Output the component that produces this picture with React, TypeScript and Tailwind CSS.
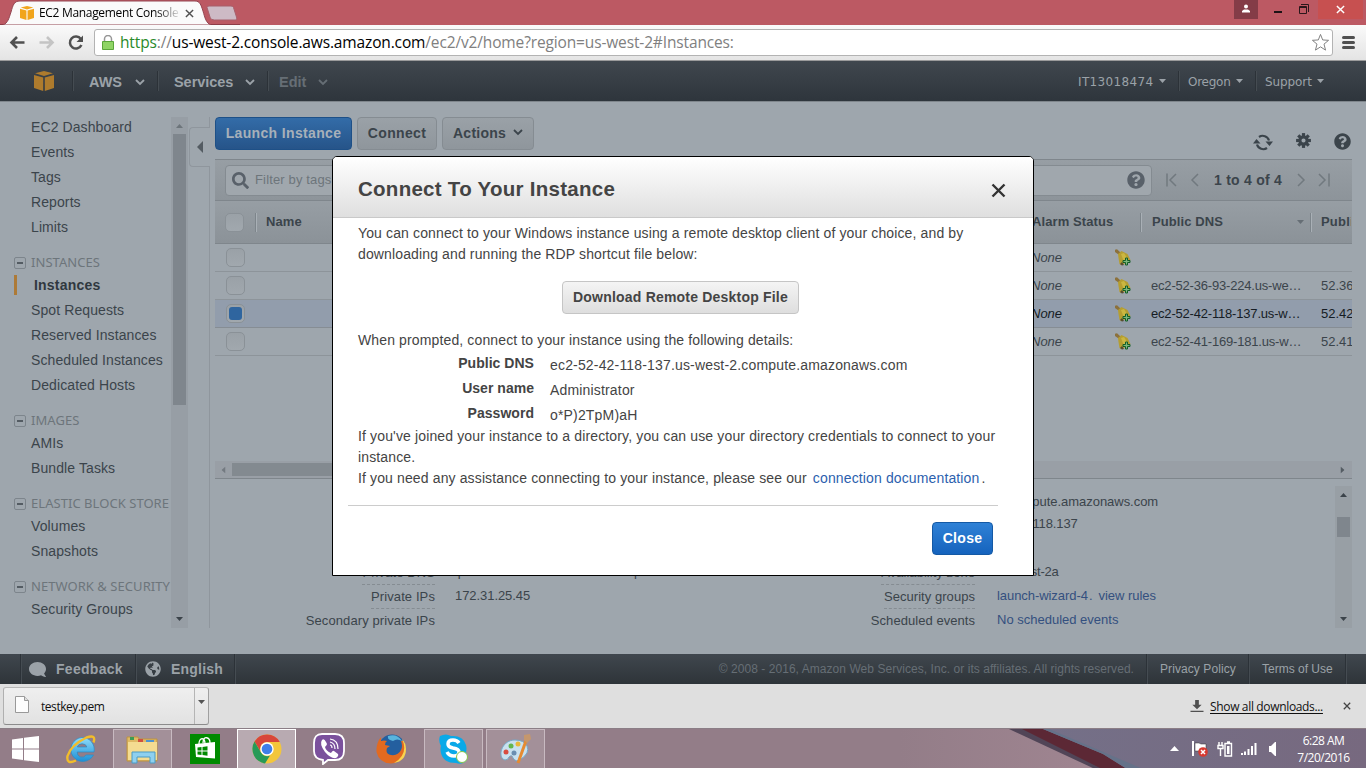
import React from "react";
import { FaComment, FaQuestionCircle, FaSearch, FaGlobeAmericas } from "react-icons/fa";

const Caret = ({ className = "" }: { className?: string }) => (
  <svg viewBox="0 0 7 4" className={"h-[4px] w-[7px] shrink-0 fill-current " + className}><path d="M0 0h7L3.500 4z" /></svg>
);
const Chevron = ({ className = "" }: { className?: string }) => (
  <svg viewBox="0 0 10 7" className={"h-[7px] w-[10px] shrink-0 " + className}><path d="M1 1l4 4 4-4" fill="none" stroke="currentColor" strokeWidth="1.800" /></svg>
);
const Cross = ({ className = "" }: { className?: string }) => (
  <svg viewBox="0 0 10 10" className={"shrink-0 " + className}><path d="M1 1l8 8M9 1L1 9" fill="none" stroke="currentColor" strokeWidth="1.600" /></svg>
);
const Cube = ({ className = "" }: { className?: string }) => (
  <svg viewBox="0 0 20 20" className={"shrink-0 fill-current " + className}>
    <path d="M1 2.300L10 0l9 2.300L10 4.900zM0 4l9.200 2.500V20L0 17zM20 4l-9.200 2.500V20L20 17z" />
  </svg>
);

function Tab() {
  return (
    <div className="relative h-[25px] shrink-0 bg-[#bc5963]">
      <svg viewBox="0 0 240 25" className="absolute left-0 top-0 h-[25px] w-[240px]">
        <path d="M0 24.500H240" stroke="#8d3c47" />
        <path d="M3 25C8 23 9 18 11 12C13 5 14 1 20 1H195C200 1 201 5 203 11C205 18 206 23 211 25z" fill="#fafafa" stroke="#934551" />
        <path d="M207 7.500q0-1.500 2-1.500h22q2 0 2.500 1.500l3.300 10.500q.5 2-1.500 2h-21q-3 0-4-2z" fill="#cdbac5" stroke="#a75f6b" />
      </svg>
      <div className="relative flex h-[25px] items-center pl-[20px]">
        <Cube className="h-[14px] w-[14px] text-[#f1a51c]" />
        <span className="ml-[5px] mt-[1px] w-[140px] overflow-hidden whitespace-nowrap bg-gradient-to-r from-black from-80% to-[#e4e4e4] bg-clip-text font-['Open_Sans',sans-serif] text-[12px] tracking-[-0.32px] text-transparent">EC2 Management Console</span>
        <Cross className="ml-[6px] mt-[1px] h-[9px] w-[9px] text-[#505050]" />
        <div className="ml-auto flex h-[25px] items-start">
          <span className="mr-[16px] flex h-[19px] w-[24px] items-center justify-center bg-[#843c47]">
            <svg viewBox="0 0 8 8" className="mb-[2px] h-[9px] w-[8px] fill-white"><circle cx="4" cy="2" r="2" /><path d="M0 8V6.500L2 5h4l2 1.500V8z" /></svg>
          </span>
          <span className="mt-[11px] h-[2px] w-[8px] bg-[#1c1215]" />
          <svg viewBox="0 0 10 10" className="ml-[17px] mt-[4px] h-[10px] w-[10px] fill-none stroke-[#2a171b]"><path d="M.500 2.500h7v7h-7zM.500 3.500h7M2 .500h7.500V8" /></svg>
          <span className="ml-[9px] flex h-[19px] w-[45px] items-center justify-center bg-[#c75050]"><Cross className="h-[9px] w-[9px] text-white" /></span>
          <span className="w-[3px]" />
        </div>
      </div>
    </div>
  );
}

function AddressBar() {
  return (
    <div className="flex h-[36px] shrink-0 items-center border-b border-[#9b9b9b] bg-gradient-to-b from-[#fafafa] to-[#e4e4e4] pl-[9px] pr-[9px]">
      <svg viewBox="0 0 16 13" className="h-[13px] w-[16px] fill-none stroke-[#505050] stroke-[2.600]"><path d="M15.500 6.500H2.500M8 1L2.500 6.500L8 12" /></svg>
      <svg viewBox="0 0 16 13" className="ml-[14px] h-[13px] w-[16px] fill-none stroke-[#c4c4c4] stroke-[2.600]"><path d="M.500 6.500h13M8 1l5.500 5.500L8 12" /></svg>
      <svg viewBox="0 0 16 16" className="ml-[12px] h-[16px] w-[17px]"><path d="M13.300 4A6 6 0 1 0 13.900 10" fill="none" stroke="#505050" strokeWidth="2.500" /><path d="M15.500.500V7H9z" fill="#505050" /></svg>
      <div className="ml-[10px] flex h-[27px] flex-1 items-center rounded-[3px] border border-[#b3b3b3] bg-white pl-[7px] pr-[2px]">
        <svg viewBox="0 0 12 15" className="h-[15px] w-[12px]"><path d="M2.500 7V4a3.500 3.500 0 0 1 7 0v3" fill="none" stroke="#969696" strokeWidth="1.500" /><path d="M.500 6.500h11v8H.500z" fill="#8fd465" stroke="#5aa63a" /></svg>
        <span className="ml-[6px] mt-[1px] whitespace-nowrap font-['Open_Sans',sans-serif] text-[15.5px] tracking-[-0.14px] text-[#808080]"><span className="text-[#2a8a2a]">https</span>://<span className="text-black">us-west-2.console.aws.amazon.com</span>/ec2/v2/home?region=us-west-2#Instances:</span>
        <svg viewBox="0 0 20 20" className="ml-auto h-[19px] w-[19px] fill-white stroke-[#7b7b7b]"><path strokeLinejoin="round" d="M10 1.500l2.300 5.800 6.200.4-4.800 4 1.600 6.300L10 14.600 4.700 18l1.600-6.300-4.800-4 6.200-.4z" /></svg>
      </div>
      <span className="ml-[9px] mr-[2px] flex w-[13px] flex-col gap-[2px]"><i className="h-[3px] rounded-sm bg-[#505050]" /><i className="h-[3px] rounded-sm bg-[#505050]" /><i className="h-[3px] rounded-sm bg-[#505050]" /></span>
    </div>
  );
}

function AwsNav() {
  const sep = "h-[20px] w-[2px] border-l border-r border-l-[#2c3238] border-r-[#454c52]";
  return (
    <div className="flex h-[40px] shrink-0 items-center bg-gradient-to-b from-[#40474e] to-[#2e353c] pl-[34px] text-[14.500px] font-bold text-[#9ba2a8]">
      <Cube className="h-[20px] w-[20px] text-[#ae7b2d]" />
      <span className={"ml-[18px] " + sep} />
      <span className="ml-[15px] mt-[3px] w-[46px]">AWS</span><Chevron className="mt-[2px] h-[6px] w-[9px]" />
      <span className={"ml-[12px] " + sep} />
      <span className="ml-[15px] mt-[3px] w-[71px] tracking-[-0.05px]">Services</span><Chevron className="mt-[2px] h-[6px] w-[9px]" />
      <span className={"ml-[12px] " + sep} />
      <span className="ml-[10px] mt-[3px] w-[39px] text-[#666e75]">Edit</span><Chevron className="mt-[2px] h-[6px] w-[9px] text-[#666e75]" />
      <div className="ml-auto flex items-center font-['DejaVu_Sans',sans-serif] text-[12px] font-normal">
        <span className="mt-[1px] w-[81px] tracking-[0.35px]">IT13018474</span><Caret />
        <span className={"ml-[12px] mr-[8px] " + sep} />
        <span className="mt-[1px] w-[48px] tracking-[-0.25px]">Oregon</span><Caret />
        <span className={"ml-[12px] mr-[8px] " + sep} />
        <span className="mt-[1px] w-[52px] tracking-[-0.1px]">Support</span><Caret className="mr-[42px]" />
      </div>
    </div>
  );
}

const groups: [string, string[]][] = [
  ["", ["EC2 Dashboard", "Events", "Tags", "Reports", "Limits"]],
  ["INSTANCES", ["Instances", "Spot Requests", "Reserved Instances", "Scheduled Instances", "Dedicated Hosts"]],
  ["IMAGES", ["AMIs", "Bundle Tasks"]],
  ["ELASTIC BLOCK STORE", ["Volumes", "Snapshots"]],
  ["NETWORK & SECURITY", ["Security Groups"]],
];

function Sidebar() {
  return (
    <div className="flex w-[189px] shrink-0 pt-[15px]">
      <div className="-mt-[3px] w-[171px] overflow-hidden pl-[14px] text-[14px] tracking-[0.1px]">
        {groups.map(([name, items]) => (
          <div key={name}>
            {name && (
              <div className="flex h-[33px] items-center whitespace-nowrap pt-[15px]">
                <span className="mr-[5px] flex h-[12px] w-[12px] shrink-0 items-center justify-center rounded-[2px] border border-[#7d858c]"><i className="h-[2px] w-[6px] bg-[#545c63]" /></span>
                <span className="font-['Noto_Sans',sans-serif] text-[13px] tracking-[0.05px] text-[#6d757b]">{name}</span>
              </div>
            )}
            {items.map((t) => (
              <div key={t} className={t === "Instances" ? "flex h-[25px] items-center font-bold tracking-[0.2px] text-[#30383f]" : "flex h-[25px] items-center pl-[17px]"}>
                {t === "Instances" && <i className="mr-[17px] h-[20px] w-[3px] bg-[#ad7a37]" />}
                <span className="mt-[2px]">{t}</span>
              </div>
            ))}
          </div>
        ))}
      </div>
      <div className="flex h-[511px] w-[17px] flex-col items-center bg-[#979ea5]">
        <span className="flex h-[17px] items-center"><Caret className="rotate-180 text-[#6d757b]" /></span>
        <span className="h-[271px] w-[13px] bg-[#7f868d]" />
        <span className="mb-[7px] mt-auto"><Caret className="text-[#3b434a]" /></span>
      </div>
    </div>
  );
}

function Splitter() {
  return (
    <div className="flex h-[526px] w-[26px] shrink-0 flex-col pt-[15px]">
      <span className="h-[10px] w-[21px] border-r border-[#8f969d]" />
      <span className="flex h-[40px] w-[21px] items-center rounded-l-[4px] border-y border-l border-[#8f969d] pl-[7px]">
        <svg viewBox="0 0 6 12" className="h-[12px] w-[6px] fill-[#545c63]"><path d="M6 0v12L0 6z" /></svg>
      </span>
      <span className="w-[21px] flex-1 border-r border-[#8f969d]" />
    </div>
  );
}

const Box = ({ on = false }: { on?: boolean }) => (
  <span className="flex h-[19px] w-[19px] items-center justify-center rounded-[5px] border border-[#8a9197] bg-gradient-to-b from-[#9aa1a7] to-[#a1a8ae]">
    {on && <i className="h-[13px] w-[13px] rounded-[3px] bg-[#2f659f]" />}
  </span>
);

const Bell = () => (
  <svg viewBox="0 0 17 17" className="h-[17px] w-[17px]">
    <path d="M1 .800l2-.600 3.500 3.300-2 2L1 3z" fill="#8c713c" />
    <path d="M4 5l3.500-3 6 3 3 6-4 2.500-5 2.800-2-1.200L4.500 9z" fill="#b59e31" />
    <path d="M7 5l3-1 3 5-3 4z" fill="#cbb741" />
    <path d="M6 15l2-2 2 3-2 .600z" fill="#554b32" />
    <path d="M11.500 9h2v2.500H16v2h-2.500V16h-2v-2.500H9v-2h2.500z" fill="#7cb77e" stroke="#135d26" />
  </svg>
);

const rows = [
  { dns: "", ip: "", on: false },
  { dns: "ec2-52-36-93-224.us-we…", ip: "52.36", on: false },
  { dns: "ec2-52-42-118-137.us-w…", ip: "52.42", on: true },
  { dns: "ec2-52-41-169-181.us-w…", ip: "52.41", on: false },
];

function InstanceTable() {
  const sep = "h-[19px] w-[2px] border-l border-r border-l-[#7d858b] border-r-[#a9b0b6]";
  return (
    <div className="flex h-[320px] flex-col border-b border-t border-[#7f868c]">
      <div className="flex h-[41px] shrink-0 items-center border-b border-[#7f868c] bg-gradient-to-b from-[#979ea4] to-[#8d949a] pl-[10px]">
        <div className="flex h-[31px] w-[927px] items-center rounded-[4px] border border-[#848b91] bg-[#a0a7ad] pl-[6px] pr-[6px] text-[13px] tracking-[0.15px] text-[#6d757b]">
          <FaSearch className="h-[17px] w-[17px] text-[#59616a]" />
          <span className="ml-[6px]">Filter by tags</span>
          <FaQuestionCircle className="ml-auto h-[18px] w-[18px] text-[#59616a]" />
        </div>
        <svg viewBox="0 0 34 14" className="ml-[14px] h-[14px] w-[34px] fill-none stroke-[#71797f] stroke-[1.500]"><path d="M1 .500v13M10 1L4 7l6 6M32 1l-6 6 6 6" /></svg>
        <span className="ml-[14px] text-[14px] font-bold tracking-[0.25px]">1 to 4 of 4</span>
        <svg viewBox="0 0 34 14" className="ml-[15px] h-[14px] w-[34px] fill-none stroke-[#71797f] stroke-[1.500]"><path d="M1 1l6 6-6 6M22 1l6 6-6 6M32 .500v13" /></svg>
      </div>
      <div className="flex h-[43px] shrink-0 items-center overflow-hidden border-b border-[#7f868c] bg-gradient-to-b from-[#979ea4] to-[#8b9298] pl-[10px] text-[13px] font-bold tracking-[0.1px]">
        <Box />
        <span className={"ml-[11px] " + sep} />
        <span className="ml-[9px] w-[766px]">Name</span>
        <span className="w-[108px] whitespace-nowrap">Alarm Status</span>
        <span className={sep} />
        <span className="ml-[10px] w-[145px]">Public DNS</span><Caret className="mr-[6px] text-[#666e75]" />
        <span className={sep} />
        <span className="ml-[9px] w-[30px] shrink-0 overflow-hidden whitespace-nowrap tracking-[0.2px]">Public IP</span>
      </div>
      {rows.map((r, i) => (
        <div key={i} className={r.on ? "flex h-[28px] shrink-0 items-center border-b border-[#868d94] bg-[#929dac] pl-[11px] text-[13px] text-[#151c24]" : "flex h-[28px] shrink-0 items-center border-b border-[#8d949a] pl-[11px] text-[13px]"}>
          <Box on={r.on} />
          <span className="ml-[786px] mt-[1px] w-[83px] italic">None</span>
          <Bell />
          <span className="ml-[20px] mt-[1px] w-[170px] whitespace-nowrap tracking-[-0.19px]">{r.dns}</span>
          <span className="mt-[1px] w-[31px] overflow-hidden whitespace-nowrap">{r.ip}</span>
        </div>
      ))}
      <div className="mt-auto flex h-[17px] items-center bg-[#999fa6] pl-[6px] pr-[6px]">
        <Caret className="-ml-[1px] rotate-90 text-[#737a81]" />
        <span className="ml-[5px] h-[13px] w-[560px] bg-[#838a90]" />
        <Caret className="ml-auto -rotate-90 text-[#545c63]" />
      </div>
    </div>
  );
}

const details: [string, string, string, string][] = [
  ["Private DNS", "ip-172-31-25-45.us-west-2.compute.internal", "Availability zone", "us-west-2a"],
  ["Private IPs", "172.31.25.45", "Security groups", ""],
  ["Secondary private IPs", "", "Scheduled events", ""],
];

function Details() {
  return (
    <div className="flex h-[149px] pt-[7px] text-[13px]">
      <div className="h-[142px] flex-1 overflow-hidden pt-[5px]">
        <div className="h-[22px] whitespace-nowrap pl-[782px] leading-[22px] tracking-[-0.03px]">2.compute.amazonaws.com</div>
        <div className="h-[22px] pl-[782px] leading-[22px] tracking-[-0.12px]">52.42.118.137</div>
        <div className="h-[26px]" />
        {details.map(([a, b, c, d], i) => (
          <div key={a} className="flex h-[24px] whitespace-nowrap leading-[22px]">
            <span className="flex w-[220px] justify-end pt-[1px] tracking-[0.1px]"><span className={i < 2 ? "h-[23px] border-b border-dashed border-[#858c92]" : "h-[23px]"}>{a}</span></span>
            <span className="w-[300px] pl-[20px] tracking-[-0.06px]">{b}</span>
            <span className="flex w-[240px] justify-end pt-[1px] tracking-[0.05px]"><span className={i < 2 ? "h-[23px] border-b border-dashed border-[#858c92]" : "h-[23px]"}>{c}</span></span>
            <span className="pl-[22px] text-[#34507f]">
              {i === 0 && <span className="tracking-[-0.2px] text-[#3b444b]">{d}</span>}
              {i === 1 && <><span className="tracking-[-0.06px]">launch-wizard-4</span><span className="ml-[1px]">.</span><span className="ml-[6px] tracking-[-0.03px]">view rules</span></>}
              {i === 2 && "No scheduled events"}
            </span>
          </div>
        ))}
      </div>
      <div className="flex h-[142px] w-[17px] flex-col items-center bg-[#989fa5]">
        <Caret className="mt-[7px] rotate-180 text-[#3b434a]" />
        <span className="mt-[20px] h-[20px] w-[13px] bg-[#7f868d]" />
        <Caret className="mb-[7px] mt-auto text-[#3b434a]" />
      </div>
    </div>
  );
}

function Workspace() {
  return (
    <div className="flex h-[553px] shrink-0 border-t border-[#7f868c] bg-[#9ea6ad] text-[#3b444b]">
      <Sidebar />
      <Splitter />
      <div className="w-[1137px] pt-[15px]">
        <div className="flex h-[42px] items-start gap-[5px] pr-[1px] text-[14px] font-bold tracking-[0.35px]">
          <span className="flex h-[33px] w-[137px] items-center justify-center rounded-[4px] border border-[#1e5087] bg-gradient-to-b from-[#336ca8] to-[#265489] text-[#a7b0b9]">Launch Instance</span>
          <span className="flex h-[33px] w-[80px] items-center justify-center rounded-[4px] border border-[#858c92] bg-gradient-to-b from-[#9aa1a7] to-[#8f969c]">Connect</span>
          <span className="flex h-[33px] w-[92px] items-center rounded-[4px] border border-[#858c92] bg-gradient-to-b from-[#9aa1a7] to-[#8f969c] pl-[10px]"><span className="w-[60px] tracking-[0.25px]">Actions</span><Chevron className="-mt-[2px]" /></span>
          <svg viewBox="0 0 20 17" className="ml-auto mt-[17px] h-[17px] w-[20px]"><path d="M4 10.500A6.500 6.500 0 0 0 14 14M16 6.500A6.500 6.500 0 0 0 6 3" fill="none" stroke="#3b444b" strokeWidth="2.200" /><path d="M0 9.500L3.500 5l4 4.500zM12.500 7.500H20L16.500 12z" fill="#3b444b" /></svg>
          <svg viewBox="-8 -8 16 16" className="ml-[18px] mt-[16px] h-[15px] w-[15px] fill-[#3b444b]">
            <path fillRule="evenodd" d="M-5.500 0a5.500 5.500 0 1 0 11 0a5.500 5.500 0 1 0-11 0M-2.200 0a2.200 2.200 0 1 0 4.400 0a2.200 2.200 0 1 0-4.400 0" />
            {[0, 45, 90, 135, 180, 225, 270, 315].map((a) => <rect key={a} x="-1.700" y="-7.900" width="3.400" height="4" transform={`rotate(${a})`} />)}
          </svg>
          <FaQuestionCircle className="ml-[18px] mt-[16px] h-[17px] w-[17px]" />
        </div>
        <InstanceTable />
        <Details />
      </div>
    </div>
  );
}

function Footer() {
  const sep = "h-[30px] w-[2px] border-l border-r border-l-[#2c3238] border-r-[#454c52]";
  return (
    <div className="flex h-[30px] shrink-0 items-center bg-gradient-to-b from-[#40474e] to-[#2e3439] pl-[20px] text-[#9ba2a8]">
      <span className={sep} />
      <FaComment className="ml-[7px] h-[17px] w-[17px] -scale-x-100" />
      <span className="ml-[10px] w-[79px] text-[14px] font-bold tracking-[0.28px]">Feedback</span>
      <span className={sep} />
      <FaGlobeAmericas className="ml-[8px] h-[16px] w-[16px]" />
      <span className="ml-[10px] w-[63px] text-[14px] font-bold tracking-[0.2px]">English</span>
      <span className={sep} />
      <span className="ml-auto text-[12px] tracking-[0.05px] text-[#666e75]">© 2008 - 2016, Amazon Web Services, Inc. or its affiliates. All rights reserved.</span>
      <span className={"ml-[12px] " + sep} />
      <span className="ml-[12px] w-[88px] text-[12px] tracking-[0.08px]">Privacy Policy</span>
      <span className={sep} />
      <span className="ml-[12px] w-[83px] text-[12px]">Terms of Use</span>
      <span className={"mr-[19px] " + sep} />
    </div>
  );
}

function DownloadShelf() {
  return (
    <div className="flex h-[44px] shrink-0 items-center bg-[#dfdfdf] pl-[3px] pr-[15px] font-['Open_Sans',sans-serif] text-[12px] text-[#111]">
      <div className="flex h-[38px] w-[206px] items-center rounded-[3px] border border-b-[#8c8c8c] border-l-[#b0b0b0] border-r-[#a0a0a0] border-t-[#b8b8b8] bg-gradient-to-b from-[#efefef] to-[#e2e2e2]">
        <svg viewBox="0 0 14 17" className="mb-[3px] ml-[11px] h-[17px] w-[14px]"><path d="M.500.500h9l4 4v12H.500z" fill="#fdfdfd" stroke="#999" /><path d="M9.500.500v4h4" fill="#ddd" stroke="#999" /></svg>
        <span className="ml-[12px] mt-[2px] w-[153px] tracking-[-0.45px]">testkey.pem</span>
        <span className="flex h-full w-[13px] justify-center border-l border-[#b5b5b5]"><Caret className="ml-[1px] mt-[12px] h-[3px] w-[5px] text-[#555]" /></span>
      </div>
      <svg viewBox="0 0 14 14" className="ml-auto h-[13px] w-[14px] fill-[#505050]"><path d="M5 0h4v5h3L7 10 2 5h3zM0 11.500h14V13H0z" /></svg>
      <span className="ml-[6px] mt-[2px] w-[113px] whitespace-nowrap tracking-[-0.34px] underline underline-offset-2">Show all downloads...</span>
      <Cross className="ml-[20px] h-[8px] w-[8px] text-[#444]" />
    </div>
  );
}

function Taskbar() {
  const active = "flex h-[40px] items-center justify-center border border-[#c8bac1] bg-white/15";
  return (
    <div className="relative h-[40px] shrink-0 overflow-hidden border-t border-[#8b7e86] bg-[#937d88]">
      <svg viewBox="0 0 466 40" preserveAspectRatio="none" className="absolute right-0 top-0 h-[40px] w-[466px]">
        <defs>
          <linearGradient id="sky"><stop offset="0" stopColor="#747088" /><stop offset="1" stopColor="#77697f" /></linearGradient>
          <linearGradient id="pink"><stop offset="0" stopColor="#937d88" /><stop offset="1" stopColor="#a08591" /></linearGradient>
        </defs>
        <path d="M0 0h115l85 40H0z" fill="url(#pink)" />
        <path d="M140 0h326v40H220z" fill="url(#sky)" />
        <path d="M109 0h20l77 40h-11z" fill="#514557" />
        <path d="M122 0h21l60 25 24 15h-25z" fill="#5c2835" />
        <path d="M143 0h6l52 22 42 18h-16l-24-15z" fill="#657289" />
      </svg>
      <div className="relative flex h-[39px] items-center">
        <svg viewBox="0 0 27 26" className="ml-[12px] h-[26px] w-[27px] fill-white"><path d="M0 3.500l11-1.500v10.500H0zM12 1.800L27 0v12.500H12zM0 13.500h11V24L0 22.500zM12 13.500h15V26l-15-1.800z" /></svg>
        <svg viewBox="0 0 32 32" className="ml-[26px] h-[32px] w-[32px]">
          <defs><linearGradient id="ie" x2="0" y2="1"><stop offset="0" stopColor="#8fdcfa" /><stop offset="1" stopColor="#1c8fd6" /></linearGradient></defs>
          <path d="M17 4.500a12 12 0 1 0 11.500 17.500h-7.500a4.800 4.800 0 0 1-8.800-3h16.800A12 12 0 0 0 17 4.500M12.300 14a5 4.500 0 0 1 9.600 0z" fill="url(#ie)" stroke="#2a8cc6" strokeWidth=".700" />
          <path d="M28.500 9.500q3-8.500-7-5Q6 12 2.500 23q-1.500 9 8.500 4.500" fill="none" stroke="#f2bd2a" strokeWidth="2.400" />
        </svg>
        <span className={"ml-[16px] w-[59px] " + active}>
          <svg viewBox="0 0 34 30" className="h-[30px] w-[34px]"><path d="M1 3h11l1 2h18v22H1z" fill="#dfba64" stroke="#bd9341" /><path d="M4 3h4v3H4z" fill="#3b9c54" /><path d="M12 5h5v3h-5z" fill="#d2503e" /><path d="M20 6h8v2h-8z" fill="#4e94cf" /><path d="M2 8h29v18H2z" fill="#f4dc91" /><path d="M6 29V18h23v11h-5v-6H11v6z" fill="#8ed0ef" stroke="#4b9bc5" /></svg>
        </span>
        <svg viewBox="0 0 30 30" className="ml-[18px] h-[30px] w-[30px]"><path d="M0 0h30v30H0z" fill="#008a00" /><path d="M5 10l20-2v16.500L6 23z" fill="#fff" /><path d="M9 10c0-7 6-7 6 0M13 9c0-8 7-6 7 0" fill="none" stroke="#fff" strokeWidth="1.300" /><path d="M7.500 13.500l4-.500v3.500h-4zM12.500 12.900l5-.600v4.200h-5zM7.500 17.500h4V21l-4-.500zM12.500 17.500h5v4.200l-5-.600z" fill="#008a00" /></svg>
        <span className="ml-[17px] flex h-[40px] w-[59px] items-center justify-center border border-white bg-white/35">
          <svg viewBox="-15 -15 30 30" className="h-[30px] w-[30px]"><circle r="14.500" fill="#f3c63c" /><path d="M0-14.500A14.500 14.500 0 0 1 12.800-7H0A7 7 0 0 0-6.500 2.500L-12.500-7.500A14.500 14.500 0 0 1 0-14.500" fill="#d8463a" /><path d="M-12.500-7.500L-6 3.500A7 7 0 0 0 3 6.500L-2 14.400A14.500 14.500 0 0 1-12.500-7.500" fill="#279a57" /><circle r="6.700" fill="#fff" /><circle r="5.300" fill="#3f7fe8" /></svg>
        </span>
        <svg viewBox="0 0 32 32" className="ml-[17px] h-[32px] w-[32px]"><path d="M9 1h13q9 0 9 9v8q0 9-9 9h-7l-5 4v-4q-9-1-9-9v-8q0-9 8-9z" fill="#7b519d" stroke="#fff" strokeWidth="1.800" /><path d="M9 7q2-2 4 2l1 2q0 1-2 3 1 4 6 6 2-3 3-2l4 3q1 2-2 4-5 1-11-6Q6 11 9 7" fill="#fff" /><path d="M17 6q8 1 8 10M17 9q5 1 5 7M17 12q2 0 2 3" fill="none" stroke="#fff" strokeWidth="1.200" /></svg>
        <svg viewBox="0 0 30 30" className="ml-[31px] h-[30px] w-[30px]"><circle cx="16" cy="14" r="13.500" fill="#245f9f" /><path d="M12 2q9-3 14 5-5-3-9 0-6-1-5-5z" fill="#59b4dd" /><path d="M27 7q4 7 1 14-4 8-13 8.500Q3 29 .500 18 0 9 5 3v4q3-1 6 0-2 1-2 4l5 1-3 2q-2 6 4 7 7 1 10-5 2-4 0-9z" fill="#e26a20" /><path d="M26 5q7 15-8 24 12-2 12-14 0-6-4-10z" fill="#f9d44e" /></svg>
        <span className={"ml-[18px] w-[59px] " + active}>
          <svg viewBox="0 0 30 30" className="h-[30px] w-[30px]"><path d="M1 2q6-3 11 0 12-1 15 9 1 4 0 7 3 6-1 10-4 3-9 1Q4 29 2 19 1 15 2 12-1 7 1 2" fill="#0aa9e8" /><path d="M20 9q-2-3-6-3-5 0-5 4 0 3 5 4 6 1 6 4 0 4-5 4t-7-4" fill="none" stroke="#fff" strokeWidth="3.500" /><circle cx="23" cy="23" r="5.500" fill="#fff" stroke="#89c646" /></svg>
        </span>
        <span className={"ml-[3px] w-[59px] " + active}>
          <svg viewBox="0 0 32 32" className="h-[32px] w-[32px]"><path d="M15 7C1 7-3 25 5 27q3 0 4-3 3-3 4 1 3 5 8 1 9-6 6-13-3-6-12-6" fill="#c9e1ef" stroke="#75a9c9" /><circle cx="6" cy="19" r="2.500" fill="#d84c40" /><circle cx="11" cy="13" r="2.500" fill="#63b64e" /><circle cx="18" cy="11" r="2.500" fill="#e8b83b" /><circle cx="14" cy="20" r="2.500" fill="#6a8eb1" /><path d="M27 5l-9 25" stroke="#e58b32" strokeWidth="3" /><path d="M24 2l6-1 1 5-4 4-3-3z" fill="#c5976d" /></svg>
        </span>
        <div className="ml-auto flex items-center font-['Open_Sans',sans-serif] text-white">
          <svg viewBox="0 0 9 5" className="h-[5px] w-[9px] fill-white"><path d="M0 5l4.500-5L9 5z" /></svg>
          <svg viewBox="0 0 16 16" className="ml-[13px] h-[16px] w-[16px]"><path d="M1 0v15" stroke="#fff" strokeWidth="2" /><path d="M3 2h4l2 1h5v7H3z" fill="#fff" stroke="#333" strokeWidth=".500" /><circle cx="11" cy="11" r="4.800" fill="#d73a31" /><path d="M9 9l4 4m0-4l-4 4" stroke="#fff" strokeWidth="1.500" /></svg>
          <svg viewBox="0 0 16 16" className="ml-[9px] h-[16px] w-[16px] fill-none stroke-white stroke-[1.400]"><path d="M2 1v3M5 1v3M1 4.500h5v3H1zM3.500 8v7" /><path d="M8 2.500h6.500V15H8zM10 1h3" /><path d="M10 5h2.500v8H10z" fill="white" stroke="none" /></svg>
          <svg viewBox="0 0 16 12" className="ml-[8px] h-[12px] w-[16px] fill-white"><path d="M0 10h2v2H0zM3 8.500h2V12H3zM6.500 6h2v6h-2zM10 3h2v9h-2zM13.500 0h2v12h-2z" /></svg>
          <svg viewBox="0 0 8 14" className="ml-[12px] h-[14px] w-[8px] fill-white"><path d="M0 4h2l4-4h1v14H6l-4-4H0z" /></svg>
          <div className="ml-[17px] mr-[13px] w-[59px] whitespace-nowrap text-center text-[12px] leading-[17px] tracking-[-0.5px]"><div>6:28 AM</div><div>7/20/2016</div></div>
        </div>
      </div>
    </div>
  );
}

const credentials = [
  ["Public DNS", "ec2-52-42-118-137.us-west-2.compute.amazonaws.com"],
  ["User name", "Administrator"],
  ["Password", "o*P)2TpM)aH"],
];

function ConnectDialog() {
  return (
    <div className="absolute left-[332px] top-[156px] h-[420px] w-[702px] rounded-t-[5px] border border-black bg-white text-[14px] text-[#444]">
      <div className="flex h-[61px] items-center justify-between rounded-t-[4px] border-b border-[#c9c9c9] bg-gradient-to-b from-white to-[#dfdfdf] pl-[25px] pr-[27px]">
        <h1 className="mt-[5px] text-[20.500px] font-bold tracking-[0.27px]">Connect To Your Instance</h1>
        <Cross className="mt-[6px] h-[15px] w-[15px] text-[#333]" />
      </div>
      <div className="whitespace-nowrap pl-[25px] pt-[5px] leading-[21px] tracking-[0.13px]">
        <p>You can connect to your Windows instance using a remote desktop client of your choice, and by<br />downloading and running the RDP shortcut file below:</p>
        <button className="ml-[204px] mt-[16px] block h-[33px] w-[237px] rounded-[4px] border border-[#c5c5c5] bg-gradient-to-b from-[#f4f4f4] to-[#dedede] font-bold tracking-[0.2px]">Download Remote Desktop File</button>
        <p className="mt-[16px]">When prompted, connect to your instance using the following details:</p>
        {credentials.map(([k, v]) => (
          <div key={k} className="flex h-[25px]">
            <b className="w-[176px] pt-[2px] text-right tracking-[0.03px]">{k}</b>
            <span className="pl-[16px] pt-[4px] tracking-[0.17px]">{v}</span>
          </div>
        ))}
        <p><span className="tracking-[0.14px]">If you've joined your instance to a directory, you can use your directory credentials to connect to your</span><br />instance.<br />If you need any assistance connecting to your instance, please see our <a className="ml-[2px] text-[#2c5fae]">connection documentation</a><span className="ml-[2px]">.</span></p>
      </div>
      <div className="ml-[15px] mr-[35px] mt-[16px] flex justify-end border-t border-[#ccc] pr-[5px] pt-[16px]">
        <button className="h-[33px] w-[61px] rounded-[4px] border border-[#1459a5] bg-gradient-to-b from-[#2f81d6] to-[#1563bd] font-bold tracking-[0.3px] text-white">Close</button>
      </div>
    </div>
  );
}

export default function App() {
  return (
    <div className="relative flex h-[768px] w-[1366px] flex-col overflow-hidden font-['Liberation_Sans',Arial,sans-serif]">
      <Tab />
      <AddressBar />
      <AwsNav />
      <Workspace />
      <Footer />
      <DownloadShelf />
      <Taskbar />
      <ConnectDialog />
    </div>
  );
}
